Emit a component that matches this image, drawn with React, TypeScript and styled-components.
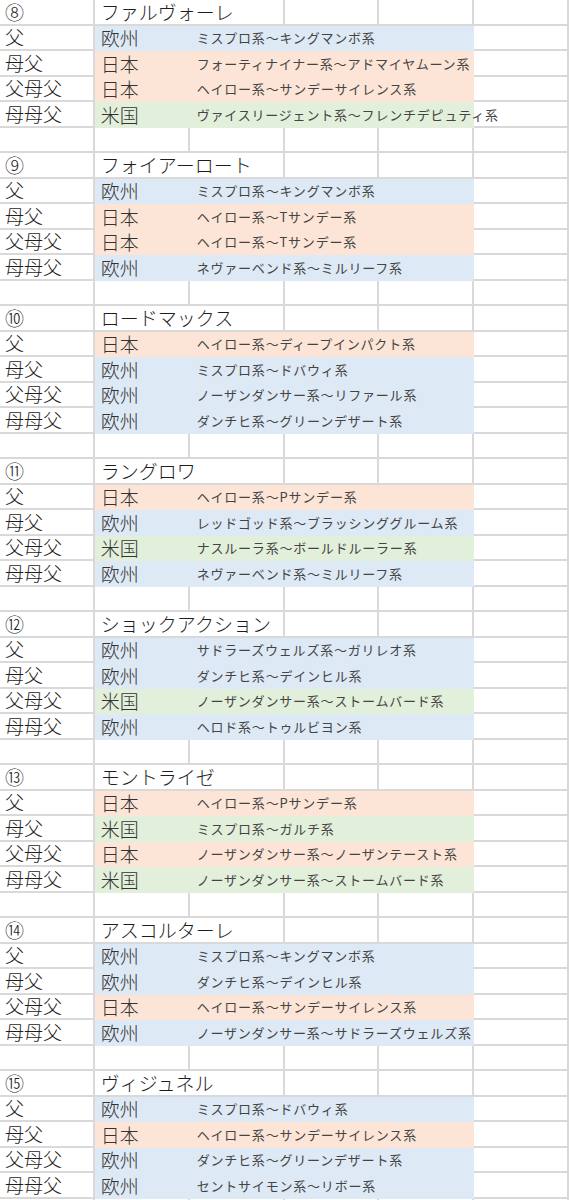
import React from "react";
import styled, { createGlobalStyle } from "styled-components";

type Region = "欧州" | "日本" | "米国";

type Line = { role: string; region: Region; lineage: string };
type Horse = { no: string; name: string; lines: Line[] };

const horses: Horse[] = [
  {
    no: "⑧",
    name: "ファルヴォーレ",
    lines: [
      { role: "父", region: "欧州", lineage: "ミスプロ系～キングマンボ系" },
      { role: "母父", region: "日本", lineage: "フォーティナイナー系～アドマイヤムーン系" },
      { role: "父母父", region: "日本", lineage: "ヘイロー系～サンデーサイレンス系" },
      { role: "母母父", region: "米国", lineage: "ヴァイスリージェント系～フレンチデピュティ系" },
    ],
  },
  {
    no: "⑨",
    name: "フォイアーロート",
    lines: [
      { role: "父", region: "欧州", lineage: "ミスプロ系～キングマンボ系" },
      { role: "母父", region: "日本", lineage: "ヘイロー系～Tサンデー系" },
      { role: "父母父", region: "日本", lineage: "ヘイロー系～Tサンデー系" },
      { role: "母母父", region: "欧州", lineage: "ネヴァーベンド系～ミルリーフ系" },
    ],
  },
  {
    no: "⑩",
    name: "ロードマックス",
    lines: [
      { role: "父", region: "日本", lineage: "ヘイロー系～ディープインパクト系" },
      { role: "母父", region: "欧州", lineage: "ミスプロ系～ドバウィ系" },
      { role: "父母父", region: "欧州", lineage: "ノーザンダンサー系～リファール系" },
      { role: "母母父", region: "欧州", lineage: "ダンチヒ系～グリーンデザート系" },
    ],
  },
  {
    no: "⑪",
    name: "ラングロワ",
    lines: [
      { role: "父", region: "日本", lineage: "ヘイロー系～Pサンデー系" },
      { role: "母父", region: "欧州", lineage: "レッドゴッド系～ブラッシンググルーム系" },
      { role: "父母父", region: "米国", lineage: "ナスルーラ系～ボールドルーラー系" },
      { role: "母母父", region: "欧州", lineage: "ネヴァーベンド系～ミルリーフ系" },
    ],
  },
  {
    no: "⑫",
    name: "ショックアクション",
    lines: [
      { role: "父", region: "欧州", lineage: "サドラーズウェルズ系～ガリレオ系" },
      { role: "母父", region: "欧州", lineage: "ダンチヒ系～デインヒル系" },
      { role: "父母父", region: "米国", lineage: "ノーザンダンサー系～ストームバード系" },
      { role: "母母父", region: "欧州", lineage: "ヘロド系～トゥルビヨン系" },
    ],
  },
  {
    no: "⑬",
    name: "モントライゼ",
    lines: [
      { role: "父", region: "日本", lineage: "ヘイロー系～Pサンデー系" },
      { role: "母父", region: "米国", lineage: "ミスプロ系～ガルチ系" },
      { role: "父母父", region: "日本", lineage: "ノーザンダンサー系～ノーザンテースト系" },
      { role: "母母父", region: "米国", lineage: "ノーザンダンサー系～ストームバード系" },
    ],
  },
  {
    no: "⑭",
    name: "アスコルターレ",
    lines: [
      { role: "父", region: "欧州", lineage: "ミスプロ系～キングマンボ系" },
      { role: "母父", region: "欧州", lineage: "ダンチヒ系～デインヒル系" },
      { role: "父母父", region: "日本", lineage: "ヘイロー系～サンデーサイレンス系" },
      { role: "母母父", region: "欧州", lineage: "ノーザンダンサー系～サドラーズウェルズ系" },
    ],
  },
  {
    no: "⑮",
    name: "ヴィジュネル",
    lines: [
      { role: "父", region: "欧州", lineage: "ミスプロ系～ドバウィ系" },
      { role: "母父", region: "日本", lineage: "ヘイロー系～サンデーサイレンス系" },
      { role: "父母父", region: "欧州", lineage: "ダンチヒ系～グリーンデザート系" },
      { role: "母母父", region: "欧州", lineage: "セントサイモン系～リボー系" },
    ],
  },
];

const fills: Record<Region, string> = {
  欧州: "#dde9f5",
  日本: "#fce4d6",
  米国: "#e2efda",
};

const GlobalStyle = createGlobalStyle`
  html, body {
    margin: 0;
    padding: 0;
    background: #ffffff;
    overflow: hidden;
  }
  body {
    font-family: "Noto Sans CJK JP", "Noto Sans", sans-serif;
    color: #222;
  }
`;

const Sheet = styled.div`
  width: 569px;
  display: grid;
  grid-template-columns: repeat(6, minmax(0, 1fr));
  grid-auto-rows: 25.5px;
`;

// a plain spreadsheet cell with its gridlines on the right and bottom
const Cell = styled.div`
  box-sizing: border-box;
  border-right: 2px solid #d9d9d9;
  border-bottom: 2px solid #d9d9d9;
  display: flex;
  align-items: center;
  white-space: nowrap;
  min-width: 0;
`;

const Label = styled(Cell)`
  padding-left: 5px;
  padding-top: 1px;
  font-size: 19px;
  font-weight: 300;
  line-height: 1.2;
  color: #1e1e1e;
`;

const Title = styled(Label)`
  grid-column: span 2;
  padding-left: 6px;
`;

const Band = styled.div<{ $fill: string }>`
  grid-column: span 4;
  background: ${(p) => p.$fill};
  display: grid;
  grid-template-columns: minmax(0, 1fr) minmax(0, 3fr);
  align-items: center;
  white-space: nowrap;
  min-width: 0;
`;

const Region = styled.span`
  padding-left: 6px;
  padding-top: 1px;
  font-size: 19px;
  font-weight: 300;
  line-height: 1.2;
  color: #333;
`;

const Lineage = styled.span`
  padding-left: 7px;
  font-size: 13px;
  letter-spacing: 0.8px;
  line-height: 1.2;
  color: #444;
  overflow: visible;
`;

const Blank = styled(Cell)``;

const HorseBlock = ({ horse }: { horse: Horse }) => (
  <>
    <Label>{horse.no}</Label>
    <Title>{horse.name}</Title>
    <Blank />
    <Blank />
    <Blank />
    {horse.lines.map((l) => (
      <React.Fragment key={l.role}>
        <Label>{l.role}</Label>
        <Band $fill={fills[l.region]}>
          <Region>{l.region}</Region>
          <Lineage>{l.lineage}</Lineage>
        </Band>
        <Blank />
      </React.Fragment>
    ))}
    {[0, 1, 2, 3, 4, 5].map((i) => (
      <Blank key={i} />
    ))}
  </>
);

export default function App() {
  return (
    <>
      <GlobalStyle />
      <Sheet>
        {horses.map((h) => (
          <HorseBlock key={h.no} horse={h} />
        ))}
      </Sheet>
    </>
  );
}
